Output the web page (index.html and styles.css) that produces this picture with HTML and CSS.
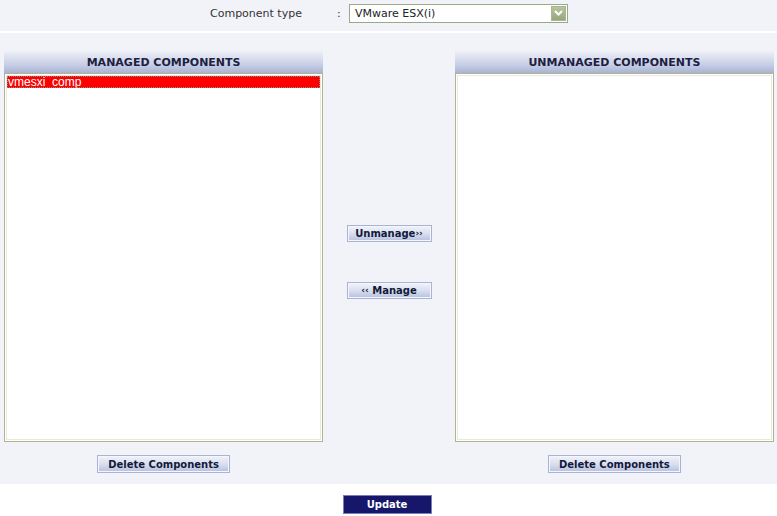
FILE: index.html
```html
<!DOCTYPE html>
<html lang="en">
<head>
    <meta charset="UTF-8">
    <title>Manage Components</title>
    <link rel="stylesheet" href="styles.css">
</head>
<body>
    <div class="filter-row">
        <span class="filter-label">Component type</span>
        <span class="filter-colon">:</span>
        <div class="select-box">
            <span class="select-value">VMware ESX(i)</span>
            <span class="select-arrow">
                <svg width="9" height="6" viewBox="0 0 9 6"><path d="M1 1 L4.5 4.5 L8 1" fill="none" stroke="#fff" stroke-width="2"/></svg>
            </span>
        </div>
    </div>

    <div class="panels">
        <div class="column">
            <div class="col-header">MANAGED COMPONENTS</div>
            <div class="list-box">
                <div class="list-item selected">vmesxi_comp</div>
            </div>
            <div class="col-footer">
                <button class="btn">Delete Components</button>
            </div>
        </div>

        <div class="middle">
            <button class="btn btn-move">Unmanage<span class="arr">››</span></button>
            <button class="btn btn-move"><span class="arr">‹‹</span> Manage</button>
        </div>

        <div class="column">
            <div class="col-header">UNMANAGED COMPONENTS</div>
            <div class="list-box"></div>
            <div class="col-footer">
                <button class="btn">Delete Components</button>
            </div>
        </div>
    </div>

    <div class="actions">
        <button class="btn-update">Update</button>
    </div>
</body>
</html>
```

FILE: styles.css
```css
body {
    margin: 0;
    background: #fff;
    font-family: 'DejaVu Sans', Verdana, sans-serif;
    font-size: 11px;
    color: #222;
}
.filter-row {
    height: 33px;
    box-sizing: border-box;
    background: #f2f3f8;
    border-bottom: 2px solid #fff;
    display: flex;
    align-items: center;
    padding-left: 210px;
    padding-bottom: 5px;
}
.filter-label {
    width: 127px;
    color: #333;
}
.filter-colon {
    width: 12px;
    color: #333;
}
.select-box {
    width: 219px;
    height: 19px;
    box-sizing: border-box;
    border: 1px solid #9aaa88;
    background: #fff;
    display: flex;
    align-items: center;
    justify-content: space-between;
    padding: 0 1px 0 5px;
}
.select-value {
    font-size: 11px;
    color: #222;
}
.select-arrow {
    width: 15px;
    height: 15px;
    background: linear-gradient(#b9c49f, #97a57c);
    border: 1px solid #aab792;
    box-sizing: border-box;
    display: flex;
    align-items: center;
    justify-content: center;
}
.panels {
    background: #f2f3f8;
    display: flex;
    padding: 18px 3px 11px 4px;
}
.column {
    width: 320px;
    display: flex;
    flex-direction: column;
}
.col-header {
    height: 22px;
    line-height: 23px;
    text-align: center;
    font-weight: bold;
    font-size: 11px;
    color: #1d2040;
    background: linear-gradient(#eef0f8, #c9d0e6 60%, #a8b3d5);
}
.list-box {
    height: 369px;
    box-sizing: border-box;
    background: #fff;
    border: 1px solid #b2b48e;
    box-shadow: inset 0 0 0 1px #fff, inset 0 0 0 2px #e9eadc;
    padding: 2px;
}
.list-item {
    font-family: 'Liberation Sans', Arial, sans-serif;
    font-size: 12px;
    line-height: 12px;
    height: 12px;
    padding-left: 1px;
}
.list-item.selected {
    background: #ff0000;
    color: #fff;
    outline: 1px dotted #888;
    outline-offset: -1px;
}
.col-footer {
    display: flex;
    justify-content: center;
    padding-top: 13px;
}
.btn {
    font-family: 'DejaVu Sans', Verdana, sans-serif;
    font-size: 10px;
    font-weight: bold;
    color: #111a3a;
    height: 18px;
    padding: 0 10px;
    border: 1px solid #aab3d3;
    box-shadow: inset 0 0 0 1px #f4f6fb;
    background: linear-gradient(#f2f3f9, #d7dcee 55%, #b5bfde);
    cursor: pointer;
}
.middle {
    width: 132px;
    display: flex;
    flex-direction: column;
    align-items: center;
    gap: 40px;
    padding-top: 174px;
}
.btn-move {
    width: 85px;
    height: 17px;
    padding: 0;
}
.arr {
    font-size: 9px;
    vertical-align: 1px;
}
.actions {
    display: flex;
    justify-content: center;
    padding: 11px 0 0 0;
}
.btn-update {
    width: 89px;
    height: 19px;
    margin-left: -3px;
    font-family: 'DejaVu Sans', Verdana, sans-serif;
    font-size: 10px;
    font-weight: bold;
    color: #fff;
    background: #16166a;
    border: 1px solid #7c7cb8;
    cursor: pointer;
}
```
